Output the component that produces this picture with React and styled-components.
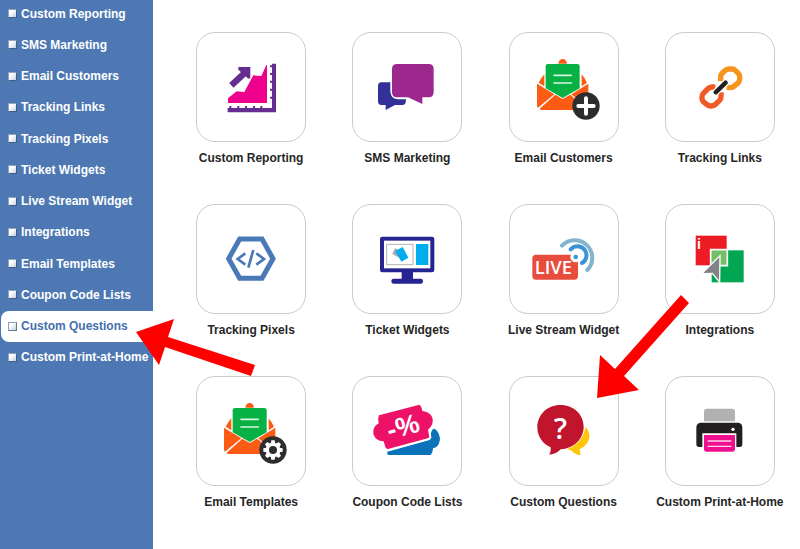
import React from 'react'
import styled, { createGlobalStyle } from 'styled-components'

const GlobalStyle = createGlobalStyle`
  * {
    box-sizing: border-box;
  }
  body {
    margin: 0;
    background: #ffffff;
    font-family: 'Liberation Sans', Arial, sans-serif;
    font-size: 12px;
    font-weight: bold;
  }
`

const Page = styled.div`
  position: relative;
  display: flex;
  min-height: 100vh;
  overflow: hidden;
`

const Sidebar = styled.nav`
  flex: none;
  width: 153px;
  background: #4d78b3;
`

const Menu = styled.ul`
  display: grid;
  grid-auto-rows: 1fr;
  min-height: 375px;
  margin: -2px 0 0;
  padding: 0 0 0 1px;
  list-style: none;
`

const MenuLink = styled.a`
  display: flex;
  align-items: center;
  gap: 4px;
  height: 100%;
  padding-left: 7px;
  border-radius: 8px 0 0 8px;
  white-space: nowrap;
  text-decoration: none;
  color: ${props => (props.$active ? '#4470ae' : '#ffffff')};
  background: ${props => (props.$active ? '#ffffff' : 'transparent')};
`

const Bullet = styled.span`
  width: 9px;
  height: 9px;
  border: 1px solid;
  border-color: ${props => (props.$active ? '#8da3c4 #5f7898 #5f7898 #8da3c4' : '#8fa5c2 #3f5d86 #3f5d86 #8fa5c2')};
  background: linear-gradient(135deg, #ffffff 30%, #c3cfdf);
`

const Content = styled.main`
  flex: 1;
  padding: 32px 2px 32px 20px;
`

const Grid = styled.div`
  display: grid;
  grid-template-columns: repeat(4, 1fr);
  row-gap: 37px;
`

const Tile = styled.a`
  display: flex;
  flex-direction: column;
  align-items: center;
  gap: 7px;
  color: #262626;
  line-height: 18px;
  white-space: nowrap;
  text-decoration: none;
`

const Frame = styled.span`
  display: block;
  width: 110px;
  height: 110px;
  border: 1px solid #cbcbcb;
  border-radius: 19px;
  background: #ffffff;
`

const Drawing = styled.svg`
  display: block;
  width: 100%;
  height: 100%;
`

const Arrows = styled.svg`
  position: absolute;
  top: 0;
  left: 0;
  width: 800px;
  height: 549px;
  pointer-events: none;
`

const ReportingIcon = () => (
  <Drawing viewBox="21 24 324 324">
    <path d="M114 220L140 199L163 201L190 151L214 153L229 120H231V234H114Z" fill="#ec008c" />
    <path
      d="M246 116H258V262H113V249H118V243H124V249H142V243H148V249H165V243H171V249H189V243H195V249H211V243H217V249H246V221H240V215H246V197H240V191H246V173H240V167H246V150H240V144H246V127H240V121H246Z"
      fill="#662d91"
    />
    <path d="M124 181L166 142" stroke="#662d91" strokeWidth="19" />
    <path d="M145 126H181V160L175 161L145 134Z" fill="#662d91" />
  </Drawing>
)

const SmsIcon = () => (
  <Drawing viewBox="25 24 324 324">
    <path
      d="M110 172H137V200Q139 222 160 223H184Q184 240 175 240H151L123 255V240H110Q100 240 100 229V183Q100 172 110 172Z"
      fill="#33309a"
    />
    <path
      d="M157 117H252Q267 117 267 132V202Q267 217 252 217H233V237L190 217H157Q142 217 142 202V132Q142 117 157 117Z"
      fill="#9c288e"
    />
  </Drawing>
)

const Envelope = () => (
  <g>
    <path d="M174 116Q176 102 187 102Q198 102 200 116Z" fill="#fc5b14" />
    <path d="M132 148V184L115 173Q124 157 132 148ZM244 148V184L260 173Q252 157 244 148Z" fill="#fc5b14" />
    <path d="M110 176L162 208L113 248Q110 246 110 240Z" fill="#fc5b14" />
    <path d="M264 176L213 208L261 248Q264 246 264 240Z" fill="#fc5b14" />
    <path d="M165 209L187 222L210 209L258 251Q256 255 250 255H125Q119 255 118 251Z" fill="#fc5b14" />
    <path
      d="M143 117H231Q238 117 238 124V190L187 219L136 190V124Q136 117 143 117Z"
      fill="#08b143"
    />
    <path d="M161 151H213M161 174H213" stroke="#d8f7df" strokeWidth="5" strokeLinecap="round" />
  </g>
)

const CustomersIcon = () => (
  <Drawing viewBox="29 24 324 324">
    <Envelope />
    <circle cx="257" cy="243" r="41" fill="#2d2d2f" />
    <path d="M257 220V266M234 243H280" stroke="#ffffff" strokeWidth="12" strokeLinecap="round" />
  </Drawing>
)

const LinksIcon = () => (
  <Drawing viewBox="33 24 324 324" fill="none" strokeWidth="16">
    <path
      d="M197 169V155Q197 149 202 144L211 136Q216 132 223 132H231Q237 132 241 136L250 145Q254 149 254 155V163Q254 169 250 173L238 183Q233 188 226 188L215 187"
      stroke="#f7941e"
    />
    <path
      d="M181 186L172 186Q165 186 160 190L145 205Q140 210 141 216V220Q142 227 146 231L156 239Q161 243 168 243Q175 243 180 239L193 227Q198 222 198 216V202"
      stroke="#f15a24"
    />
    <path d="M182 202L212 173" stroke="#ffffff" strokeWidth="21" strokeLinecap="round" />
    <path d="M182 202L212 173" stroke="#231f20" strokeWidth="13" strokeLinecap="round" />
  </Drawing>
)

const PixelsIcon = () => (
  <Drawing viewBox="21 15 324 324" fill="none" stroke="#4a79b8">
    <path d="M149 117H216L249 176L216 235H149L116 176Z" strokeWidth="15" />
    <path d="M166 160L143 177L166 194M199 160L222 177L199 194M190 150L175 203" strokeWidth="8" />
  </Drawing>
)

const WidgetsIcon = () => (
  <Drawing viewBox="490 15 324 324">
    <rect x="571" y="110" width="163" height="107" rx="7" fill="#262491" />
    <rect x="583" y="122" width="139" height="83" fill="#ffffff" />
    <path d="M636 216H670V236H693Q700 236 700 243Q700 251 693 251H612Q605 251 605 243Q605 236 612 236H636Z" fill="#262491" />
    <rect x="591" y="133" width="79" height="61" fill="#ffffff" stroke="#b1b3b6" strokeWidth="3" />
    <rect x="679" y="132" width="37" height="63" fill="#00aeef" />
    <path d="M616 145L640 157L630 174L608 162Z" fill="#a7a9ac" />
    <path d="M617 153L639 141L656 173L635 185Z" fill="#00aeef" />
  </Drawing>
)

const LiveIcon = () => (
  <Drawing viewBox="29 15 324 324">
    <rect x="96" y="164" width="137" height="75" rx="11" fill="#e84c3d" />
    <circle cx="226" cy="171" r="16" fill="#ffffff" />
    <circle cx="226" cy="171" r="7" fill="#3498db" />
    <g fill="none" strokeLinecap="round" strokeWidth="12">
      <path d="M211 148A27 27 0 1 1 245 189" stroke="#3b93d6" />
      <path d="M185 137A52 52 0 1 1 261 210" stroke="#82b4cf" />
    </g>
    <text
      x="159"
      y="223"
      textAnchor="middle"
      fontFamily="'Open Sans', sans-serif"
      fontSize="55"
      fontWeight="600"
      fill="#ffffff"
    >
      LIVE
    </text>
  </Drawing>
)

const IntegrationsIcon = () => (
  <Drawing viewBox="228 15 324 324">
    <rect x="317" y="107" width="93" height="89" fill="#ed1c24" />
    <rect x="365" y="151" width="96" height="96" fill="#00a651" />
    <path d="M362 200V149H412V197H388" fill="#72bf65" stroke="#ffffff" strokeWidth="5" />
    <path d="M388 172L340 219L368 218L387 241Z" fill="#808285" stroke="#ffffff" strokeWidth="8" paintOrder="stroke" />
    <text x="321" y="147" fontFamily="'Liberation Sans', sans-serif" fontSize="42" fontWeight="bold" fill="#ffffff">
      i
    </text>
  </Drawing>
)

const teeth = [0, 45, 90, 135, 180, 225, 270, 315]

const TemplatesIcon = () => (
  <Drawing viewBox="29 24 324 324">
    <Envelope />
    <circle cx="257" cy="243" r="41" fill="#2d2d2f" />
    <g fill="#ffffff">
      {teeth.map(angle => (
        <path key={angle} d="M250 224L252 214H262L264 224Z" transform={`rotate(${angle} 257 243)`} />
      ))}
    </g>
    <circle cx="257" cy="243" r="17" fill="none" stroke="#ffffff" strokeWidth="10" />
  </Drawing>
)

const CouponIcon = () => (
  <Drawing viewBox="25 21 324 324">
    <path
      d="M128 245L256 209Q255 190 265 177Q271 174 278 184Q291 203 282 222Q278 232 265 235Q265 248 258 255H131Q126 252 128 245Z"
      fill="#0c72b9"
    />
    <path
      d="M103 136L224 104Q230 107 233 123Q257 126 263 143Q269 162 250 179L254 201Q253 204 249 205L130 237Q124 237 122 231L117 214Q91 212 86 191Q83 170 102 160Q98 147 103 136Z"
      fill="#ed1268"
      stroke="#ffffff"
      strokeWidth="12"
      paintOrder="stroke"
    />
    <text
      x="175"
      y="197"
      textAnchor="middle"
      transform="rotate(-15 175 170)"
      fontFamily="'Liberation Sans', sans-serif"
      fontSize="80"
      fontWeight="bold"
      fill="#ffffff"
    >
      -%
    </text>
  </Drawing>
)

const QuestionsIcon = () => (
  <Drawing viewBox="29 21 324 324">
    <path d="M256 170Q272 188 265 210Q259 227 238 238L241 255Q223 254 214 242L200 237Q247 220 256 170Z" fill="#fdc60b" />
    <path
      d="M180 105C222 105 250 135 250 171C250 208 219 236 181 238Q169 252 147 254Q153 243 151 232C126 222 111 198 111 172C111 135 140 105 180 105Z"
      fill="#c0152c"
    />
    <text x="180" y="206" textAnchor="middle" fontFamily="'Open Sans', sans-serif" fontSize="88" fontWeight="600" fill="#ffffff">
      ?
    </text>
  </Drawing>
)

const PrinterIcon = () => (
  <Drawing viewBox="498 21 324 324">
    <path d="M612 154V125Q612 116 621 116H696Q705 116 705 125V154Z" fill="#b1b1b1" />
    <path d="M604 158H712Q727 158 727 173V223Q727 231 719 231H709V190H607V231H597Q589 231 589 223V173Q589 158 604 158Z" fill="#231f20" />
    <circle cx="699" cy="178" r="5" fill="#ffffff" />
    <path d="M612 195H705V238Q705 245 698 245H619Q612 245 612 238Z" fill="#f0108f" />
    <path d="M623 213H694M623 229H694" stroke="#ffd3ec" strokeWidth="4" />
  </Drawing>
)

const features = [
  { name: 'Custom Reporting', Icon: ReportingIcon },
  { name: 'SMS Marketing', Icon: SmsIcon },
  { name: 'Email Customers', Icon: CustomersIcon },
  { name: 'Tracking Links', Icon: LinksIcon },
  { name: 'Tracking Pixels', Icon: PixelsIcon },
  { name: 'Ticket Widgets', Icon: WidgetsIcon },
  { name: 'Live Stream Widget', Icon: LiveIcon },
  { name: 'Integrations', Icon: IntegrationsIcon },
  { name: 'Email Templates', Icon: TemplatesIcon },
  { name: 'Coupon Code Lists', Icon: CouponIcon },
  { name: 'Custom Questions', Icon: QuestionsIcon },
  { name: 'Custom Print-at-Home', Icon: PrinterIcon },
]

const current = 'Custom Questions'

const App = () => {
  return (
    <Page>
      <GlobalStyle />

      <Sidebar>
        <Menu>
          {features.map(({ name }) => (
            <li key={name}>
              <MenuLink href="#" $active={name === current}>
                <Bullet $active={name === current} />
                {name}
              </MenuLink>
            </li>
          ))}
        </Menu>
      </Sidebar>

      <Content>
        <Grid>
          {features.map(({ name, Icon }) => (
            <Tile href="#" key={name}>
              <Frame>
                <Icon />
              </Frame>
              {name}
            </Tile>
          ))}
        </Grid>
      </Content>

      <Arrows viewBox="0 0 800 549" fill="#ff0000" aria-hidden="true">
        <path d="M136 332L174 319L168 337L255 365L251 376L165 347L159 365Z" />
        <path d="M597 398L600 355L615 369L681 295L689 303L624 376L639 390Z" />
      </Arrows>
    </Page>
  )
}

export default App
